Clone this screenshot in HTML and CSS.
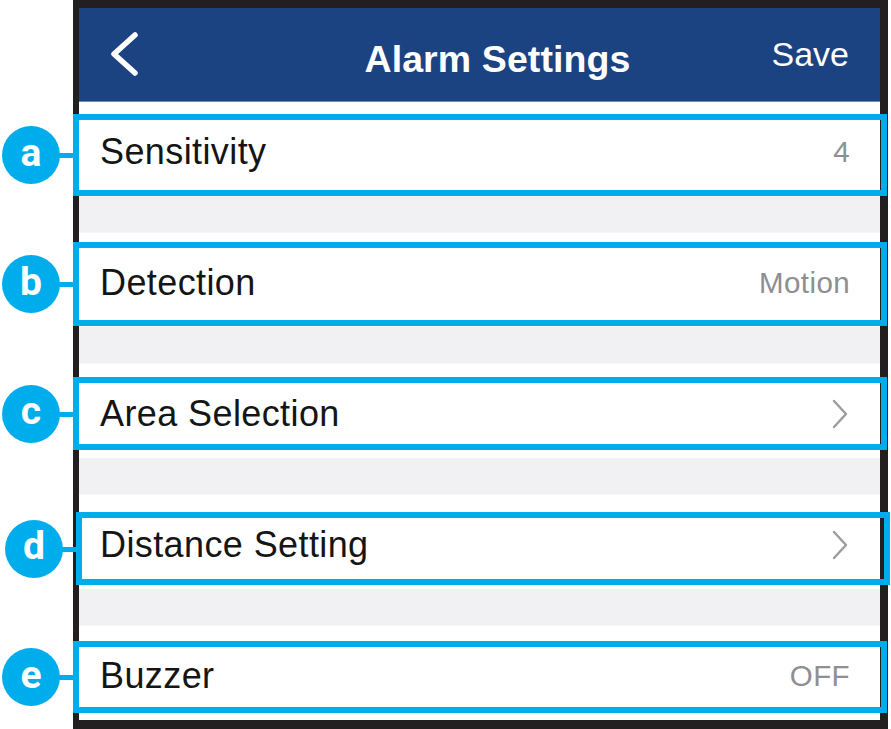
FILE: index.html
```html
<!DOCTYPE html>
<html lang="en">
<head>
<meta charset="utf-8">
<title>Alarm Settings</title>
<link rel="stylesheet" href="styles.css">
</head>
<body>
<div class="page">
  <div class="phone">
    <header class="nav">
      <span class="back" aria-label="Back">
        <svg width="32" height="46" viewBox="0 0 32 46"><path d="M26 4 L5 23 L26 42" fill="none" stroke="#fff" stroke-width="5.5" stroke-linecap="round" stroke-linejoin="round"/></svg>
      </span>
      <h1 class="title">Alarm Settings</h1>
      <span class="save">Save</span>
    </header>
    <ul class="list">
      <li class="row">
        <span class="label">Sensitivity</span>
        <span class="value">4</span>
        <span class="callout callout-a"><span class="badge">a</span></span>
      </li>
      <li class="gap"></li>
      <li class="row">
        <span class="label">Detection</span>
        <span class="value">Motion</span>
        <span class="callout callout-b"><span class="badge">b</span></span>
      </li>
      <li class="gap"></li>
      <li class="row">
        <span class="label">Area Selection</span>
        <svg class="chev" width="18" height="30" viewBox="0 0 18 30"><path d="M3 2 L15 15 L3 28" fill="none" stroke="#9b9ba0" stroke-width="2.4" stroke-linecap="round" stroke-linejoin="round"/></svg>
        <span class="callout callout-c"><span class="badge">c</span></span>
      </li>
      <li class="gap"></li>
      <li class="row">
        <span class="label">Distance Setting</span>
        <svg class="chev" width="18" height="30" viewBox="0 0 18 30"><path d="M3 2 L15 15 L3 28" fill="none" stroke="#9b9ba0" stroke-width="2.4" stroke-linecap="round" stroke-linejoin="round"/></svg>
        <span class="callout callout-d"><span class="badge">d</span></span>
      </li>
      <li class="gap"></li>
      <li class="row">
        <span class="label">Buzzer</span>
        <span class="value">OFF</span>
        <span class="callout callout-e"><span class="badge">e</span></span>
      </li>
    </ul>
  </div>
</div>
</body>
</html>
```
FILE: styles.css
```css
html, body {
  margin: 0;
  padding: 0;
  background: #ffffff;
}
body {
  width: 891px;
  height: 729px;
  overflow: hidden;
  font-family: "Liberation Sans", Arial, sans-serif;
}
.page {
  padding-left: 73px;
}
.phone {
  width: 801px;
  border-style: solid;
  border-color: #231f20;
  border-width: 8px 8px 9px 6px;
  background: #ffffff;
}
.nav {
  height: 93px;
  background: #1c4381;
  border-bottom: 1px solid #6f88b6;
  display: grid;
  grid-template-columns: 1fr auto 1fr;
  align-items: center;
  padding: 0 31px 0 30px;
  color: #ffffff;
}
.back {
  display: flex;
  align-items: center;
  justify-self: start;
  margin-top: -2px;
}
.title {
  margin: 0 0 0 37px;
  padding-top: 10px;
  font-size: 37.5px;
  font-weight: bold;
  letter-spacing: 0.1px;
}
.save {
  justify-self: end;
  font-size: 34px;
  margin-top: -1px;
}
.list {
  list-style: none;
  margin: 0;
  padding: 0;
  display: flex;
  flex-direction: column;
}
.row {
  position: relative;
  height: 94px;
  box-sizing: border-box;
  padding: 6px 30px 0 21px;
  display: flex;
  align-items: center;
  justify-content: space-between;
  background: #ffffff;
}
.gap {
  height: 37px;
  background: #f1f1f4;
  border-bottom: 1px solid #f7f7f9;
  box-sizing: border-box;
}
.label {
  font-size: 36px;
  letter-spacing: 0.4px;
  color: #151515;
}
.value {
  font-size: 29.5px;
  color: #8e8e93;
  letter-spacing: 0.4px;
}
.chev {
  display: block;
  margin-right: 1px;
}
.callout {
  position: absolute;
  left: -6px;
  right: -7px;
  border: 6px solid #00adec;
}
.callout-a { top: 12px; bottom: 0; }
.callout-b { top: 9px; bottom: 1px; }
.callout-c { top: 13px; bottom: 8px; }
.callout-d { top: 17px; bottom: 4px; left: -3px; right: -10px; }
.callout-e { top: 15px; bottom: 7px; }
.badge {
  position: absolute;
  left: -77px;
  top: 50%;
  width: 58px;
  height: 58px;
  margin-top: -29px;
  border-radius: 50%;
  background: #00adec;
  color: #ffffff;
  font-family: Roboto, "Liberation Sans", sans-serif;
  font-weight: bold;
  font-size: 39px;
  display: flex;
  align-items: center;
  justify-content: center;
  line-height: 1;
  padding-bottom: 4px;
  box-sizing: border-box;
}
.badge::after {
  content: "";
  position: absolute;
  left: 56px;
  top: 50%;
  margin-top: -2px;
  width: 21px;
  height: 5px;
  background: #00adec;
}
```
